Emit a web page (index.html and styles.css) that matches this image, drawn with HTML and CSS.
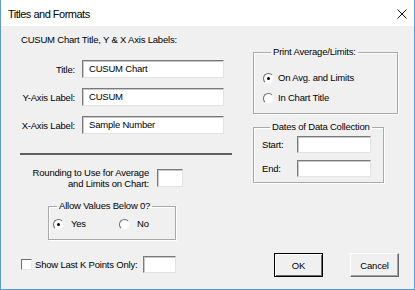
FILE: index.html
```html
<!DOCTYPE html>
<html lang="en">

<head>
    <meta charset="UTF-8">
    <title>Titles and Formats</title>
    <link rel="stylesheet" href="styles.css">
</head>

<body>
    <div class="window">
        <div class="titlebar">
            <span class="caption">Titles and Formats</span>
            <svg class="close" width="10" height="10" viewBox="0 0 10 10">
                <path d="M0.5 0.5 L9.5 9.5 M9.5 0.5 L0.5 9.5" stroke="#111" stroke-width="1" fill="none"/>
            </svg>
        </div>

        <div class="content">
            <div class="left">
                <div class="heading">CUSUM Chart Title, Y &amp; X Axis Labels:</div>

                <div class="field first">
                    <label>Title:</label>
                    <div class="box wide">CUSUM Chart</div>
                </div>
                <div class="field">
                    <label>Y-Axis Label:</label>
                    <div class="box wide">CUSUM</div>
                </div>
                <div class="field">
                    <label>X-Axis Label:</label>
                    <div class="box wide">Sample Number</div>
                </div>

                <div class="separator"></div>

                <div class="rounding">
                    <div class="rounding-text">Rounding to Use for Average<br>and Limits on Chart:</div>
                    <div class="box small"></div>
                </div>

                <fieldset class="group allow">
                    <legend>Allow Values Below 0?</legend>
                    <div class="radios">
                        <div class="option yes"><span class="radio checked"></span>Yes</div>
                        <div class="option"><span class="radio"></span>No</div>
                    </div>
                </fieldset>

                <div class="lastk">
                    <span class="checkbox"></span>
                    <span class="lastk-label">Show Last K Points Only:</span>
                    <div class="box kbox"></div>
                </div>
            </div>

            <div class="right">
                <fieldset class="group print">
                    <legend>Print Average/Limits:</legend>
                    <div class="option row"><span class="radio checked"></span>On Avg. and Limits</div>
                    <div class="option row"><span class="radio"></span>In Chart Title</div>
                </fieldset>

                <fieldset class="group dates">
                    <legend>Dates of Data Collection</legend>
                    <div class="date-row">
                        <label>Start:</label>
                        <div class="box date"></div>
                    </div>
                    <div class="date-row">
                        <label>End:</label>
                        <div class="box date"></div>
                    </div>
                </fieldset>

                <div class="buttons">
                    <button class="default">OK</button>
                    <button>Cancel</button>
                </div>
            </div>
        </div>
    </div>
</body>

</html>
```

FILE: styles.css
```css
body {
    margin: 0;
    padding: 0;
    font-family: 'Liberation Sans', Arial, sans-serif;
    font-size: 9.5px;
    letter-spacing: -0.2px;
    color: #000;
}

.window {
    width: 415px;
    height: 290px;
    box-sizing: border-box;
    border: 1px solid #5b9bd5;
    border-top: none;
    background-color: #f0f0f0;
    display: flex;
    flex-direction: column;
}

.titlebar {
    height: 26px;
    background-color: #fff;
    display: flex;
    align-items: center;
    justify-content: space-between;
    padding: 0 7px 0 7px;
}

.caption {
    font-size: 11px;
    letter-spacing: -0.5px;
    padding-top: 1px;
}

.close {
    display: block;
    margin-top: 1px;
}

.content {
    flex: 1;
    display: flex;
    padding-left: 19px;
}

.left {
    width: 212px;
    display: flex;
    flex-direction: column;
}

.right {
    width: 146px;
    margin-left: 21px;
    display: flex;
    flex-direction: column;
}

.heading {
    margin-top: 8px;
    padding-left: 1px;
    line-height: 12px;
}

.field {
    display: flex;
    align-items: center;
    margin-top: 10px;
}

.field.first {
    margin-top: 14px;
}

.field label {
    width: 60px;
    margin-left: -5px;
    text-align: right;
    white-space: nowrap;
    margin-right: 7px;
}

.box {
    box-sizing: border-box;
    height: 18px;
    background-color: #fff;
    border: 1px solid;
    border-color: #7a7a7a #e3e3e3 #e3e3e3 #7a7a7a;
    box-shadow: inset 1px 1px 0 #c8c8c8;
    line-height: 16px;
    padding-left: 6px;
}

.box.wide {
    width: 142px;
}

.box.small {
    width: 26px;
}

.separator {
    margin-top: 19px;
    height: 2px;
    background-color: #5f5f5f;
}

.rounding {
    width: 163px;
    display: flex;
    justify-content: flex-end;
    align-items: center;
    margin-top: 11px;
}

.rounding-text {
    text-align: right;
    line-height: 11px;
    margin-right: 8px;
    padding-top: 1px;
    white-space: nowrap;
}

.group {
    margin: 0;
    padding: 0;
    border: 1px solid #a9a9a9;
    box-shadow: inset 1px 1px 0 #fff, 1px 1px 0 #fff;
    min-width: 0;
}

.group legend {
    margin-left: 8px;
    padding: 0 2px;
    line-height: 12px;
}

.allow {
    margin-top: 11px;
    margin-left: 28px;
    width: 128px;
    box-sizing: border-box;
}

.radios {
    display: flex;
    padding: 6px 0 9px 4px;
    line-height: 12px;
}

.option {
    display: flex;
    align-items: center;
}

.option.yes {
    width: 66px;
}

.radio {
    width: 11px;
    height: 11px;
    box-sizing: border-box;
    border-radius: 50%;
    border: 1px solid;
    border-color: #6d6d6d #f4f4f4 #f4f4f4 #6d6d6d;
    background-color: #fff;
    margin-right: 7px;
    display: flex;
    align-items: center;
    justify-content: center;
}

.radio.checked::after {
    content: "";
    width: 3px;
    height: 3px;
    border-radius: 50%;
    background-color: #000;
}

.lastk {
    display: flex;
    align-items: center;
    margin-top: 16px;
}

.checkbox {
    width: 11px;
    height: 11px;
    box-sizing: border-box;
    margin-left: 1px;
    background-color: #fff;
    border: 1px solid;
    border-color: #6d6d6d #e8e8e8 #e8e8e8 #6d6d6d;
    margin-right: 3px;
}

.lastk-label {
    width: 108px;
    white-space: nowrap;
}

.box.kbox {
    width: 33px;
    height: 17px;
}

.print {
    margin-top: 20px;
    width: 145px;
    box-sizing: border-box;
    padding: 14px 0 9px 9px;
}

.print .row {
    line-height: 12px;
}

.print .row + .row {
    margin-top: 8px;
}

.print .radio {
    margin-right: 4px;
}

.dates {
    margin-top: 7px;
    width: 131px;
    box-sizing: border-box;
    padding: 3px 0 5px 8px;
}

.date-row {
    display: flex;
    align-items: center;
}

.date-row + .date-row {
    margin-top: 7px;
}

.date-row label {
    width: 35px;
}

.box.date {
    width: 74px;
    height: 17px;
}

.buttons {
    display: flex;
    justify-content: flex-end;
    margin-top: auto;
    margin-bottom: 12px;
    gap: 27px;
}

button {
    width: 49px;
    height: 24px;
    box-sizing: border-box;
    font-family: 'Liberation Sans', Arial, sans-serif;
    font-size: 9.5px;
    letter-spacing: -0.2px;
    color: #000;
    background-color: #f0f0f0;
    border: 1px solid;
    border-color: #fff #696969 #696969 #fff;
    box-shadow: inset -1px -1px 0 #a0a0a0;
    padding: 0;
}

button.default {
    border: 1px solid #000;
    box-shadow: inset 1px 1px 0 #fff, inset -1px -1px 0 #696969;
}
```
